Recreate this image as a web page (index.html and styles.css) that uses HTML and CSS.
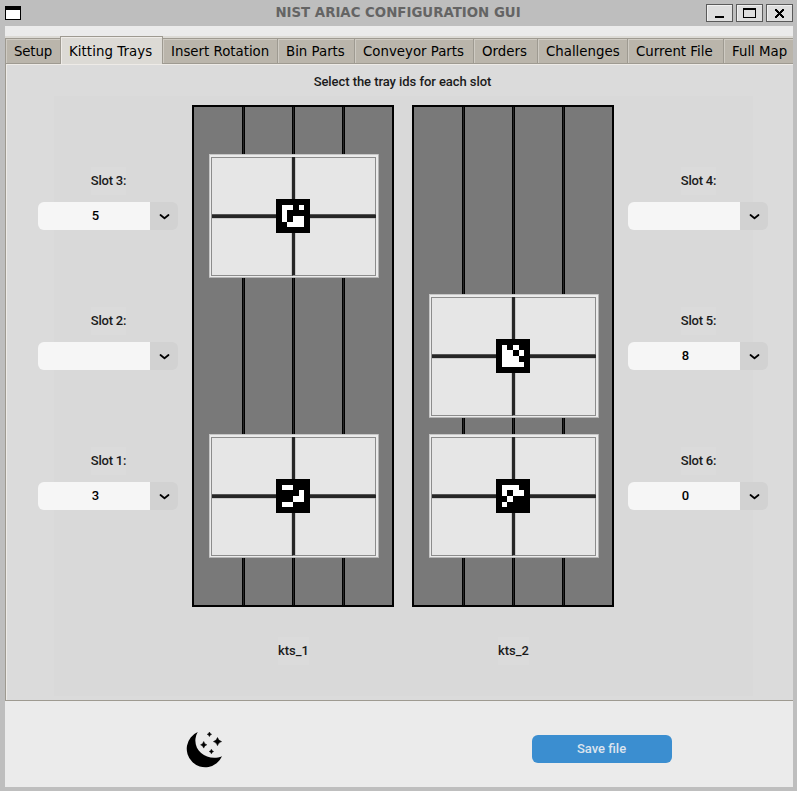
FILE: index.html
```html
<!DOCTYPE html>
<html lang="en">
<head>
<meta charset="utf-8">
<title>NIST ARIAC CONFIGURATION GUI</title>
<link rel="stylesheet" href="styles.css">
</head>
<body>
<svg class="defs" aria-hidden="true">
  <symbol id="tray" viewBox="0 0 170 124">
    <rect width="170" height="124" fill="#b4b4b4"/>
    <rect width="169" height="123" fill="#c6c6c6"/>
    <rect x="1" y="1" width="168" height="122" fill="#ebebeb"/>
    <rect x="2" y="3" width="165" height="119" fill="#8c8c8c"/>
    <rect x="3" y="4" width="163" height="117" fill="#e6e6e6"/>
    <path fill="#c8c8c8" d="M82 4h5v117h-5zM3 60h163v5H3z"/>
    <path fill="#555" d="M83 3h1v119h-1zM3 60h164v1H3z"/>
    <path fill="#262626" d="M83 3h3v118h-3zM3 61h164v3H3z"/>
    <rect x="67" y="45" width="34" height="34" fill="#000"/>
  </symbol>
</svg>
<header class="titlebar">
  <svg class="app-icon" width="16" height="14" shape-rendering="crispEdges"><rect width="16" height="14"/><rect x="1" y="4" width="14" height="9" fill="#fff"/></svg>
  <h1 class="title">NIST ARIAC CONFIGURATION GUI</h1>
  <div class="win-buttons">
    <span class="win-btn"><svg width="27" height="18" shape-rendering="crispEdges"><rect x="9" y="12" width="9" height="2"/></svg></span>
    <span class="win-btn"><svg width="27" height="18" shape-rendering="crispEdges"><path d="M7 4h13v10H7zM8 6v7h11V6z" fill-rule="evenodd"/></svg></span>
    <span class="win-btn"><svg width="27" height="18" shape-rendering="crispEdges"><path d="M9 5h2v1h1v1h1v1h1V7h1V6h1V5h2v2h-1v1h-1v1h-1v1h1v1h1v1h1v2h-2v-1h-1v-1h-1v-1h-1v1h-1v1h-1v1H9v-2h1v-1h1v-1h1V9h-1V8h-1V7H9z"/></svg></span>
  </div>
</header>
<div class="window">
  <nav class="tabs">
    <span class="tab t-setup">Setup</span>
    <span class="tab t-trays active">Kitting Trays</span>
    <span class="tab t-insert">Insert Rotation</span>
    <span class="tab t-bins">Bin Parts</span>
    <span class="tab t-conveyor">Conveyor Parts</span>
    <span class="tab t-orders">Orders</span>
    <span class="tab t-challenges">Challenges</span>
    <span class="tab t-file">Current File</span>
    <span class="tab t-map">Full Map</span>
  </nav>
  <main class="panel">
    <p class="hint">Select the tray ids for each slot</p>
    <div class="board">
      <div class="slots">
        <div class="slot"><span class="label">Slot 3:</span><div class="combo"><span class="value">5</span><span class="arrow"><svg width="28" height="28"><path d="M10.5 13l4 3.2 4-3.2"/></svg></span></div></div>
        <div class="slot"><span class="label">Slot 2:</span><div class="combo"><span class="value"></span><span class="arrow"><svg width="28" height="28"><path d="M10.5 13l4 3.2 4-3.2"/></svg></span></div></div>
        <div class="slot"><span class="label">Slot 1:</span><div class="combo"><span class="value">3</span><span class="arrow"><svg width="28" height="28"><path d="M10.5 13l4 3.2 4-3.2"/></svg></span></div></div>
      </div>
      <div class="station first">
        <svg width="202" height="502" shape-rendering="crispEdges">
          <rect width="202" height="502"/><rect x="2" y="2" width="198" height="498" fill="#797979"/>
          <path d="M50 2h3v498h-3zM100 2h3v498h-3zM150 2h3v498h-3z"/>
          <path fill="#262626" d="M51 2h1v498h-1zM101 2h1v498h-1zM151 2h1v498h-1z"/>
          <use href="#tray" x="17" y="49" width="170" height="124"/>
          <path fill="#fff" d="M90 100h11v5h-11zM107 100h5v5h-5zM90 105h5v12h-5zM101 111h11v6h-11zM95 117h17v5H95z"/>
          <use href="#tray" x="17" y="329" width="170" height="124"/>
          <path fill="#fff" d="M90 380h11v5h-11zM107 385h5v12h-5zM101 391h6v6h-6zM90 397h11v5h-11z"/>
        </svg>
        <span class="label">kts_1</span>
      </div>
      <div class="station">
        <svg width="202" height="502" shape-rendering="crispEdges">
          <rect width="202" height="502"/><rect x="2" y="2" width="198" height="498" fill="#797979"/>
          <path d="M50 2h3v498h-3zM100 2h3v498h-3zM150 2h3v498h-3z"/>
          <path fill="#262626" d="M51 2h1v498h-1zM101 2h1v498h-1zM151 2h1v498h-1z"/>
          <use href="#tray" x="17" y="189" width="170" height="124"/>
          <path fill="#fff" d="M90 240h5v22h-5zM101 240h6v5h-6zM95 245h6v12h-6zM107 245h5v6h-5zM101 251h6v6h-6zM95 257h17v5H95z"/>
          <use href="#tray" x="17" y="329" width="170" height="124"/>
          <path fill="#fff" d="M90 380h17v5H90zM90 385h5v6h-5zM101 385h11v6h-11zM95 391h6v6h-6zM90 397h5v5h-5z"/>
        </svg>
        <span class="label">kts_2</span>
      </div>
      <div class="slots">
        <div class="slot"><span class="label">Slot 4:</span><div class="combo"><span class="value"></span><span class="arrow"><svg width="28" height="28"><path d="M10.5 13l4 3.2 4-3.2"/></svg></span></div></div>
        <div class="slot"><span class="label">Slot 5:</span><div class="combo"><span class="value">8</span><span class="arrow"><svg width="28" height="28"><path d="M10.5 13l4 3.2 4-3.2"/></svg></span></div></div>
        <div class="slot"><span class="label">Slot 6:</span><div class="combo"><span class="value">0</span><span class="arrow"><svg width="28" height="28"><path d="M10.5 13l4 3.2 4-3.2"/></svg></span></div></div>
      </div>
    </div>
  </main>
  <footer class="footer">
    <svg class="moon" width="38" height="38" viewBox="0.8 0 38 38">
      <path d="M12.500 2A18.400 18.400 0 1 0 36.800 26.200C24 31.500 8.500 22.500 10.300 8.500Q10.700 5 12.500 2z"/>
      <path d="M18.500 11.500q.7 2.700 3.100 3.300q-2.400.6-3.100 3.300q-.7-2.700-3.100-3.300q2.400-.6 3.100-3.300zM32.300 7.500q1 3.400 4.100 4.100q-3.100.7-4.100 4.100q-1-3.400-4.100-4.100q3.100-.7 4.100-4.100zM24.200 2q.5 1.800 2.200 2.300q-1.700.5-2.200 2.300q-.5-1.800-2.200-2.300q1.700-.5 2.200-2.300zM26.200 19.200q.5 1.800 2.200 2.300q-1.700.5-2.200 2.300q-.5-1.800-2.200-2.300q1.700-.5 2.200-2.300z" stroke="#000" stroke-width=".5"/>
    </svg>
    <button class="save">Save file</button>
  </footer>
</div>
</body>
</html>
```
FILE: styles.css
```css
* { box-sizing: border-box; }
body {
  margin: 0;
  width: 797px;
  height: 791px;
  overflow: hidden;
  background: #bebebe;
  font-family: Roboto, sans-serif;
}
svg { display: block; }
.defs { position: absolute; width: 0; height: 0; }

.titlebar {
  display: grid;
  grid-template-columns: 92px 1fr 92px;
  height: 26px;
  padding: 0 4px 0 5px;
}
.app-icon { margin-top: 6px; }
.title {
  margin: 0 2px 0 0;
  text-align: center;
  font: bold 13.33px/25px "DejaVu Sans", sans-serif;
  color: #646464;
  white-space: nowrap;
}
.win-buttons { display: flex; gap: 3px; padding-top: 4px; justify-content: flex-end; }
.win-btn {
  flex: none;
  width: 27px;
  height: 18px;
  background: #dedede;
  box-shadow: inset 0 0 0 1px #5a5a5a, inset 2px 2px #f0f0f0;
}

.window {
  width: 788px;
  height: 761px;
  margin-left: 5px;
  padding-top: 10px;
  overflow: hidden;
  background: #ebebeb;
}
.tabs {
  display: flex;
  align-items: flex-end;
  width: 820px;
  height: 28px;
  background: #dcdad5;
}
.tab {
  flex: none;
  height: 26px;
  padding-left: 8px;
  background: #bab5ab;
  border: solid #9e9a91;
  border-width: 1px 0 1px 1px;
  box-shadow: inset 1px 1px #cfcbc3;
  color: #000;
  font: 13.33px/26px "DejaVu Sans", sans-serif;
  white-space: nowrap;
}
.tab.active {
  height: 28px;
  background: #dcdad5;
  border-bottom: 0;
  border-right-width: 1px;
  box-shadow: inset 1px 1px #eeebe7;
  letter-spacing: .06px;
  line-height: 30px;
}
.t-setup { width: 56px; letter-spacing: -.15px; }
.t-trays { width: 103px; margin-left: -1px; }
.t-insert { width: 115px; margin-left: -1px; }
.t-bins { width: 77px; }
.t-conveyor { width: 119px; }
.t-orders { width: 64px; }
.t-challenges { width: 90px; }
.t-file { width: 96px; }
.t-map { width: 90px; }
.t-insert { border-left-color: #9e9a91; }

.panel {
  width: 810px;
  height: 637px;
  border: solid #9e9a91;
  border-width: 0 0 1px 1px;
  box-shadow: inset 1px 1px #eeebe7;
  background: linear-gradient(#d9d9d9, #d9d9d9) 48px 32px / 699px 600px no-repeat #dbdbdb;
}
.hint {
  width: 793px;
  margin: 0;
  padding-top: 4px;
  text-align: center;
  font-size: 13px;
  font-weight: 500;
  letter-spacing: -.06px;
  line-height: 28px;
  color: #1a1a1a;
}
.board { display: flex; gap: 14px; margin: 9px 0 0 32px; }
.slots { display: flex; flex-direction: column; gap: 77px; width: 140px; padding-top: 62px; }
.slot { display: flex; flex-direction: column; align-items: center; gap: 7px; }
.label {
  height: 28px;
  margin-left: 1px;
  background: #dbdbdb;
  color: #1a1a1a;
  font-size: 13px;
  font-weight: 500;
  line-height: 28px;
}
.slot .label { letter-spacing: -.22px; }
.combo { display: flex; width: 140px; height: 28px; border-radius: 6px; overflow: hidden; }
.value {
  width: 112px;
  padding-left: 3px;
  background: #f6f6f6;
  color: #000;
  font-size: 13px;
  font-weight: 500;
  line-height: 28px;
  text-align: center;
}
.arrow { width: 28px; background: #d2d2d2; }
.arrow path { fill: none; stroke: #000; stroke-width: 1.8; stroke-linecap: round; stroke-linejoin: round; }
.station { display: flex; flex-direction: column; align-items: center; gap: 30px; }
.first { margin-right: 4px; }

.footer { display: flex; align-items: center; gap: 308px; height: 86px; padding: 10px 0 0 181px; }
.save {
  width: 140px;
  height: 28px;
  padding: 0 1px 0 0;
  border: 0;
  border-radius: 6px;
  background: #3b8ed0;
  color: #dce4ee;
  font: 500 13px/28px Roboto, sans-serif;
}
```
